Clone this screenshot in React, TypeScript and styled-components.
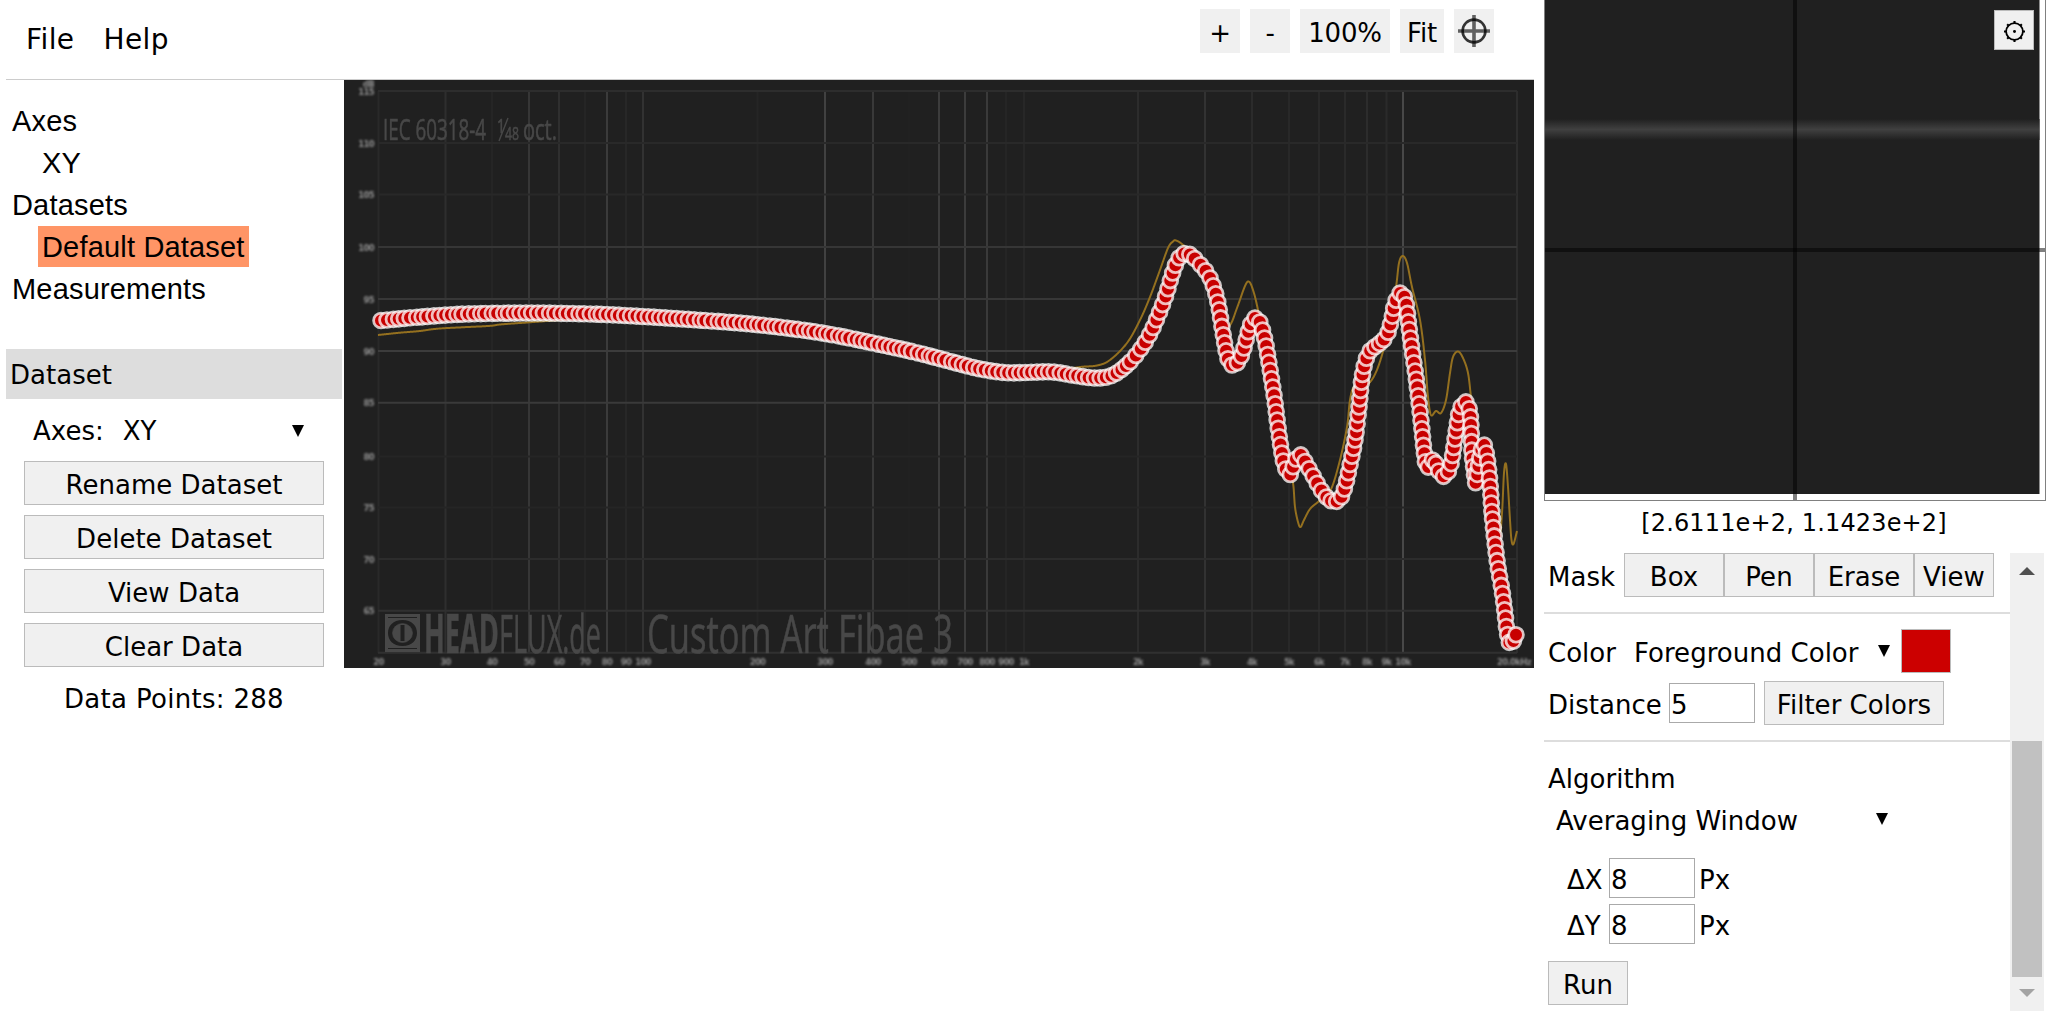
import React from "react";
import styled, { createGlobalStyle } from "styled-components";

const UI_FONT = `Verdana, "DejaVu Sans", sans-serif`;

const GlobalStyle = createGlobalStyle`
  * {
    box-sizing: border-box;
  }
  body {
    margin: 0;
    overflow: hidden;
    background: #fff;
    color: #000;
    font-family: ${UI_FONT};
    font-size: 26px;
    letter-spacing: 0.02px;
  }
`;

const Page = styled.div`
  display: flex;
  width: 2071px;
  height: 1013px;
  overflow: hidden;
`;

const Workspace = styled.div`
  display: flex;
  flex-direction: column;
  width: 1528px;
  margin-left: 6px;
`;

const TopBar = styled.header`
  display: flex;
  justify-content: space-between;
  height: 80px;
  border-bottom: 1px solid #ccc;
`;

const Menu = styled.nav`
  display: flex;
  gap: 29px;
  padding: 22px 0 0 20px;
  font-size: 28px;
  line-height: 35px;
  letter-spacing: 0.4px;
`;

const Toolbar = styled.div`
  display: flex;
  gap: 10px;
  padding: 9px 40px 0 0;
`;

const ToolButton = styled.button<{ $width: number }>`
  display: flex;
  align-items: center;
  justify-content: center;
  width: ${(p) => p.$width}px;
  height: 44px;
  padding: 4px 0 0;
  border: none;
  background: #f0f0f0;
  font: inherit;
  letter-spacing: -0.2px;
`;

const Body = styled.div`
  display: flex;
  flex: 1;
`;

const Sidebar = styled.aside`
  width: 338px;
  flex: none;
`;

const Tree = styled.div`
  display: flex;
  flex-direction: column;
  align-items: flex-start;
  gap: 1px;
  padding: 20px 0 0 2px;
  font-family: Arial, "Liberation Sans", sans-serif;
  font-size: 29px;
  line-height: 41px;
  letter-spacing: 0.18px;
`;

const TreeItem = styled.div<{ $child?: boolean; $selected?: boolean }>`
  height: 41px;
  padding: 1px 4px 0;
  margin-left: ${(p) => (p.$child ? 30 : 0)}px;
  background: ${(p) => (p.$selected ? "#ff9566" : "transparent")};
`;

const SectionTitle = styled.h2`
  width: 336px;
  height: 50px;
  margin: 40px 0 0;
  padding: 2px 0 0 4px;
  background: #ddd;
  font-size: 26px;
  font-weight: normal;
  line-height: 48px;
`;

const AxesRow = styled.div`
  display: flex;
  align-items: center;
  height: 62px;
  padding: 2px 40px 0 27px;
`;

const AxesValue = styled.span`
  flex: 1;
  margin-left: 19px;
`;

const Button = styled.button<{ $width?: number }>`
  display: flex;
  align-items: center;
  justify-content: center;
  width: ${(p) => p.$width || 300}px;
  height: 44px;
  padding: 4px 0 0;
  border: 1px solid #bbb;
  background: #f0f0f0;
  color: #000;
  font: inherit;
  letter-spacing: inherit;
  white-space: nowrap;
`;

const ButtonStack = styled.div`
  display: flex;
  flex-direction: column;
  gap: 10px;
  padding-left: 18px;
`;

const PointCount = styled.p`
  width: 336px;
  margin: 12px 0 0;
  text-align: center;
  line-height: 40px;
  letter-spacing: 0.3px;
`;

const RightPanel = styled.aside`
  width: 502px;
  margin-left: 10px;
  flex: none;
`;

const Magnifier = styled.div`
  position: relative;
  height: 501px;
  border: 1px solid #808080;
  border-top: none;
`;

const SettingsButton = styled.button`
  position: absolute;
  top: 10px;
  right: 11px;
  width: 40px;
  height: 40px;
  padding: 0;
  border: 1px solid #bbb;
  background: #f0f0f0;
`;

const Coordinates = styled.div`
  height: 52px;
  padding-top: 5px;
  padding-right: 2px;
  text-align: center;
  font-size: 24px;
  line-height: 34px;
  letter-spacing: 0.15px;
`;

const ToolsArea = styled.div`
  display: flex;
  height: 458px;
`;

const Tools = styled.div`
  width: 466px;
`;

const Section = styled.section<{ $height: number }>`
  height: ${(p) => p.$height}px;
  border-bottom: 2px solid #ddd;
`;

const ToolRow = styled.div<{ $top?: number; $indent?: number; $height?: number }>`
  display: flex;
  align-items: center;
  height: ${(p) => p.$height || 44}px;
  margin-top: ${(p) => p.$top || 0}px;
  padding-left: ${(p) => p.$indent || 4}px;
`;

const Label = styled.span<{ $width?: number }>`
  width: ${(p) => (p.$width ? `${p.$width}px` : "auto")};
  flex: none;
  padding-top: 3px;
  white-space: nowrap;
`;

const Field = styled.input<{ $gap?: number }>`
  width: 86px;
  height: 40px;
  margin-right: ${(p) => p.$gap || 9}px;
  padding: 3px 1px 0;
  border: 1px solid #aaa;
  background: #fff;
  font: inherit;
  outline: none;
`;

const Swatch = styled.span`
  width: 50px;
  height: 44px;
  margin-left: 11px;
  border: 1px solid #bbb;
  background: #cc0000;
`;

const Scrollbar = styled.div`
  display: flex;
  flex-direction: column;
  align-items: center;
  width: 34px;
  height: 458px;
  padding-top: 14px;
  background: #f0f0f0;
`;

const Thumb = styled.div`
  width: 30px;
  height: 236px;
  margin: 166px 0 12px;
  background: #c1c1c1;
`;

const ChartSvg = styled.svg`
  display: block;
  background: #202020;
`;

const AxisLabels = styled.g`
  fill: #8c8c8c;
  font: bold 8.5px "DejaVu Sans", sans-serif;
  letter-spacing: -0.7px;
  filter: blur(0.8px);
`;

const Watermark = styled.g`
  fill: #484848;
  stroke: #484848;
  stroke-width: 0.6px;
  font-family: "Open Sans", sans-serif;
  letter-spacing: 0;
  filter: blur(0.7px);
`;

const SoftGroup = styled.g`
  filter: blur(0.4px);
`;

const DropArrow = (): JSX.Element => (
  <svg width="12" height="12" viewBox="0 0 12 12">
    <path d="M0 0H12L6 12Z" />
  </svg>
);

const ScrollArrow = ({ down }: { down?: boolean }): JSX.Element => (
  <svg width="16" height="8" viewBox="0 0 16 8">
    <path d={down ? "M0 0H16L8 8Z" : "M8 0L16 8H0Z"} fill={down ? "#a3a3a3" : "#505050"} />
  </svg>
);

type Point = [number, number];

// traced response, in canvas pixels
const RESPONSE: Point[] = [
  [381, 320.5], [420, 317], [466, 314], [526, 313], [553, 313.2], [600, 314.3], [647, 316.7], [693, 319.7], [743, 323.3],
  [787, 328], [830, 334.3], [873, 343], [917, 352.7], [960, 364], [983, 369.5], [1007, 372.7], [1030, 372.3], [1053, 372],
  [1075, 375.5], [1097, 378], [1113, 375], [1128, 364], [1140, 350], [1150, 334], [1158, 316], [1165.7, 296], [1171.7, 276],
  [1177, 261.5], [1183, 254], [1190, 254.5], [1197, 261], [1206.5, 272], [1213, 285], [1218, 303], [1222, 327],
  [1225.7, 349], [1228, 359], [1232.3, 365], [1239, 361], [1244, 348], [1249, 329], [1253, 320], [1257, 318], [1261, 325],
  [1265, 340], [1268, 357], [1271.7, 380], [1275, 402], [1278, 427], [1281.7, 452], [1285, 467], [1290, 474.5],
  [1293, 467], [1297, 457], [1301, 455], [1305, 461.5], [1311, 472], [1317, 483], [1325, 495.5], [1333, 501.5],
  [1340, 499], [1345, 487], [1350, 465], [1355, 440], [1359, 407], [1361.7, 380], [1365, 363], [1370, 351], [1380, 343],
  [1387, 335], [1391.7, 319], [1395, 303], [1401.3, 292.3], [1406, 303], [1409, 327], [1412.5, 353], [1416, 377],
  [1418.7, 400], [1421.7, 427], [1424, 450], [1427, 467.5], [1434, 458.5], [1437, 468], [1442.7, 476], [1447, 474],
  [1451, 464], [1454, 446], [1456.7, 427], [1460, 409], [1466.3, 402], [1470, 413], [1471.3, 433], [1472, 453],
  [1474, 470], [1475.7, 482.5], [1479.5, 460], [1483.3, 444], [1487, 457], [1490, 483], [1492, 513], [1495, 543],
  [1498, 567], [1502, 590], [1505, 613], [1507, 631], [1510.7, 645], [1516, 634.7],
];

const TARGET: Point[] = [
  [378, 335], [400, 332.7], [420, 331], [440, 328.5], [488, 326], [500, 324.5], [527, 322.5],
  [580, 319], [647, 318], [743, 325], [830, 336], [917, 353], [960, 364], [1007, 372], [1053, 371], [1080, 367],
  [1097, 365.5], [1110, 360], [1127, 343], [1140, 320], [1150, 297], [1160, 270], [1168, 248], [1173, 241.5],
  [1176, 240.5], [1183, 245], [1197, 260], [1212, 290], [1222, 325], [1230, 325], [1237, 308], [1245, 286], [1249, 281.7],
  [1253, 290], [1258, 310], [1270, 370], [1280, 430], [1288, 465], [1293, 483], [1295, 507], [1298, 522], [1300.5, 527],
  [1304, 520], [1310, 509], [1318, 502], [1325, 496], [1332, 487], [1340, 460], [1347, 427], [1350, 400], [1354, 387],
  [1362, 388], [1373, 378], [1382, 355], [1390, 320], [1396, 287], [1399, 263], [1402.7, 256], [1407, 263], [1412, 287],
  [1420, 320], [1425, 360], [1428, 397], [1431, 415], [1436, 411], [1441, 413], [1446, 400], [1450, 373], [1453, 357],
  [1458, 351.5], [1463, 358], [1468, 373], [1471, 397], [1475, 430], [1482, 470], [1492, 530], [1499, 540], [1502, 513],
  [1504, 473], [1506, 464], [1508, 487], [1510, 520], [1511.5, 540], [1513.5, 544], [1517, 531],
];

const smooth = (points: Point[]): Point[] => {
  const out: Point[] = [];
  for (let i = 0; i < points.length - 1; i++) {
    const a = points[Math.max(0, i - 1)];
    const b = points[i];
    const c = points[i + 1];
    const d = points[Math.min(points.length - 1, i + 2)];
    for (let k = 0; k < 40; k++) {
      const t = k / 40;
      const at = (n: 0 | 1): number =>
        0.5 *
        (2 * b[n] +
          (c[n] - a[n]) * t +
          (2 * a[n] - 5 * b[n] + 4 * c[n] - d[n]) * t * t +
          (3 * b[n] - a[n] - 3 * c[n] + d[n]) * t * t * t);
      out.push([at(0), at(1)]);
    }
  }
  out.push(points[points.length - 1]);
  return out;
};

// steep parts get a wider spacing than flat ones
const sample = (points: Point[]): Point[] => {
  const out: Point[] = [points[0]];
  let run = 0;
  for (let i = 1; i < points.length; i++) {
    const dx = Math.abs(points[i][0] - points[i - 1][0]);
    const dy = Math.abs(points[i][1] - points[i - 1][1]);
    run += Math.hypot(dx, dy) / (dy > dx ? 8.3 : 5.8);
    if (run >= 1) {
      out.push(points[i]);
      run -= 1;
    }
  }
  out.push(points[points.length - 1]);
  return out;
};

const DOTS = sample(smooth(RESPONSE));
const TARGET_LINE = smooth(TARGET)
  .map((p) => p.join(","))
  .join(" ");

// [x, stroke, label]
const COLUMNS: [number, string, string][] = [
  [378.5, "#292929", "20"], [445.5, "#2e2e2e", "30"], [492, "#252525", "40"], [529, "#363636", "50"], [559, "#2f2f2f", "60"],
  [585, "#252525", "70"], [607, "#3b3b3b", "80"], [626, "#272727", "90"], [643, "#323232", "100"], [757.5, "#252525", "200"],
  [825, "#414141", "300"], [873, "#393939", "400"], [909, "#212121", "500"], [939, "#3c3c3c", "600"], [965, "#3c3c3c", "700"],
  [987, "#3a3a3a", "800"], [1006, "#252525", "900"], [1024, "#272727", "1k"], [1138, "#2c2c2c", "2k"], [1205, "#323232", "3k"],
  [1252, "#2b2b2b", "4k"], [1289, "#282828", "5k"], [1319, "#292929", "6k"], [1345, "#2a2a2a", "7k"], [1367, "#2c2c2c", "8k"],
  [1386.5, "#2a2a2a", "9k"], [1403, "#484848", "10k"], [1517, "#2d2d2d", "20.0kHz"],
];

const ROWS: [number, string, string][] = [
  [91, "#2d2d2d", "115"], [143, "#292929", "110"], [194.5, "#282828", "105"], [247, "#363636", "100"], [299, "#373737", "95"],
  [351, "#3c3c3c", "90"], [402.7, "#3a3a3a", "85"], [456.5, "#252525", "80"], [507.5, "#252525", "75"], [559, "#2c2c2c", "70"],
  [610.8, "#303030", "65"], [652.7, "#303030", ""],
];

const Chart = (): JSX.Element => (
  <ChartSvg width="1190" height="588" viewBox="344 80 1190 588">
    <g strokeWidth="2">
      {COLUMNS.map(([x, stroke]) => (
        <line key={x} x1={x} x2={x} y1="91" y2="653" stroke={stroke} />
      ))}
      {ROWS.map(([y, stroke]) => (
        <line key={y} x1="378" x2="1517" y1={y} y2={y} stroke={stroke} />
      ))}
    </g>
    <AxisLabels>
      {COLUMNS.map(([x, , label]) => (
        <text key={label} x={x === 1517 ? 1514 : x} y="665" textAnchor="middle">
          {label}
        </text>
      ))}
      {ROWS.map(([y, , label]) => (
        <text key={label} x="374" y={y + 3.5} textAnchor="end">
          {label}
        </text>
      ))}
      <text x="374" y="87" textAnchor="end">
        dB
      </text>
    </AxisLabels>
    <Watermark>
      <text x="383" y="140" fontSize="30" textLength="103" lengthAdjust="spacingAndGlyphs">
        IEC 60318-4
      </text>
      <text x="497" y="133" fontSize="20" textLength="8" lengthAdjust="spacingAndGlyphs">
        1
      </text>
      <path d="M499 141L508 118" strokeWidth="1.4" />
      <text x="505" y="140" fontSize="18" textLength="14" lengthAdjust="spacingAndGlyphs">
        48
      </text>
      <text x="523" y="140" fontSize="30" textLength="34" lengthAdjust="spacingAndGlyphs">
        oct.
      </text>
      <path
        fillRule="evenodd"
        stroke="none"
        d="M385 614H420V652H385Z M388 617V618H417V617Z M388 648V649H417V648Z M402.5 620C393 620 388 626 388 633S393 646 402.5 646S417 640 417 633S412 620 402.5 620Z"
      />
      <ellipse cx="402.5" cy="633" rx="10" ry="9.5" />
      <rect x="400.5" y="625" width="4" height="16" fill="#202020" stroke="none" />
      <text x="424" y="652.5" fontSize="53" fontWeight="bold" textLength="75" lengthAdjust="spacingAndGlyphs">
        HEAD
      </text>
      <text x="499" y="652.5" fontSize="53" textLength="102" lengthAdjust="spacingAndGlyphs">
        FLUX.de
      </text>
      <text x="647" y="652.5" fontSize="53" textLength="306" lengthAdjust="spacingAndGlyphs">
        Custom Art Fibae 3
      </text>
    </Watermark>
    <SoftGroup>
      <polyline points={TARGET_LINE} fill="none" stroke="#94701f" strokeWidth="2" />
    </SoftGroup>
    <SoftGroup fill="#c80000" stroke="#fff" strokeOpacity="0.75" strokeWidth="2.8">
      {DOTS.map(([x, y], index) => (
        <circle key={index} cx={x} cy={y} r="7.4" />
      ))}
    </SoftGroup>
  </ChartSvg>
);

const MagnifierView = (): JSX.Element => (
  <svg width="500" height="500" viewBox="0 0 500 500" display="block">
    <defs>
      <linearGradient id="band" x1="0" x2="0" y1="0" y2="1">
        <stop offset="0" stopColor="#202020" />
        <stop offset="0.5" stopColor="#404040" />
        <stop offset="1" stopColor="#202020" />
      </linearGradient>
    </defs>
    <rect width="494.5" height="494" fill="#202020" />
    <rect y="119" width="494.5" height="21" fill="url(#band)" />
    <g stroke="#000" strokeOpacity="0.5" strokeWidth="4">
      <path d="M250 0V500" />
      <path d="M0 250H500" />
    </g>
  </svg>
);

const CrosshairIcon = (): JSX.Element => (
  <svg width="32" height="32" viewBox="0 0 32 32" fill="none" style={{ marginTop: -4 }}>
    <circle cx="16" cy="16" r="11.4" stroke="#333" strokeWidth="2.6" />
    <path d="M16 0V32M0 16H32" stroke="#000" strokeOpacity="0.6" strokeWidth="3.6" />
  </svg>
);

const GearIcon = (): JSX.Element => (
  <svg width="21" height="21" viewBox="0 0 20 20" fill="none" stroke="#000" style={{ display: "block", margin: "2px auto 0" }}>
    <circle cx="10" cy="10" r="8" strokeWidth="1.7" />
    <circle cx="10" cy="10" r="1.4" fill="#000" stroke="none" />
    <path d="M10 0V2M10 18V20M0 10H2M18 10H20M3 3L4.4 4.4M17 3L15.6 4.4M3 17L4.4 15.6M17 17L15.6 15.6" strokeWidth="2" />
  </svg>
);

const DATASET_ACTIONS = ["Rename Dataset", "Delete Dataset", "View Data", "Clear Data"];

const App = (): JSX.Element => (
  <>
    <GlobalStyle />
    <Page>
      <Workspace>
        <TopBar>
          <Menu>
            <span>File</span>
            <span>Help</span>
          </Menu>
          <Toolbar>
            <ToolButton $width={40}>+</ToolButton>
            <ToolButton $width={40}>-</ToolButton>
            <ToolButton $width={90}>100%</ToolButton>
            <ToolButton $width={44}>Fit</ToolButton>
            <ToolButton $width={40}>
              <CrosshairIcon />
            </ToolButton>
          </Toolbar>
        </TopBar>
        <Body>
          <Sidebar>
            <Tree>
              <TreeItem>Axes</TreeItem>
              <TreeItem $child>XY</TreeItem>
              <TreeItem>Datasets</TreeItem>
              <TreeItem $child $selected>
                Default Dataset
              </TreeItem>
              <TreeItem>Measurements</TreeItem>
            </Tree>
            <SectionTitle>Dataset</SectionTitle>
            <AxesRow>
              <span>Axes:</span>
              <AxesValue>XY</AxesValue>
              <DropArrow />
            </AxesRow>
            <ButtonStack>
              {DATASET_ACTIONS.map((label) => (
                <Button key={label}>{label}</Button>
              ))}
            </ButtonStack>
            <PointCount>Data Points: 288</PointCount>
          </Sidebar>
          <Chart />
        </Body>
      </Workspace>
      <RightPanel>
        <Magnifier>
          <MagnifierView />
          <SettingsButton>
            <GearIcon />
          </SettingsButton>
        </Magnifier>
        <Coordinates>[2.6111e+2, 1.1423e+2]</Coordinates>
        <ToolsArea>
          <Tools>
            <Section $height={61}>
              <ToolRow>
                <Label $width={76}>Mask</Label>
                <Button $width={100}>Box</Button>
                <Button $width={90}>Pen</Button>
                <Button $width={100}>Erase</Button>
                <Button $width={80}>View</Button>
              </ToolRow>
            </Section>
            <Section $height={113}>
              <ToolRow $top={15}>
                <Label $width={86}>Color</Label>
                <Label $width={244}>Foreground Color</Label>
                <DropArrow />
                <Swatch />
              </ToolRow>
              <ToolRow $top={8}>
                <Label $width={121}>Distance</Label>
                <Field defaultValue="5" />
                <Button $width={180}>Filter Colors</Button>
              </ToolRow>
            </Section>
            <ToolRow $top={13}>
              <Label>Algorithm</Label>
            </ToolRow>
            <ToolRow $indent={12} $top={-2}>
              <Label $width={320}>Averaging Window</Label>
              <DropArrow />
            </ToolRow>
            <ToolRow $indent={23} $top={17} $height={40}>
              <Label $width={42}>ΔX</Label>
              <Field $gap={4} defaultValue="8" />
              <Label>Px</Label>
            </ToolRow>
            <ToolRow $indent={23} $top={6} $height={40}>
              <Label $width={42}>ΔY</Label>
              <Field $gap={4} defaultValue="8" />
              <Label>Px</Label>
            </ToolRow>
            <ToolRow $indent={4} $top={17}>
              <Button $width={80}>Run</Button>
            </ToolRow>
          </Tools>
          <Scrollbar>
            <ScrollArrow />
            <Thumb />
            <ScrollArrow down />
          </Scrollbar>
        </ToolsArea>
      </RightPanel>
    </Page>
  </>
);

export default App;
